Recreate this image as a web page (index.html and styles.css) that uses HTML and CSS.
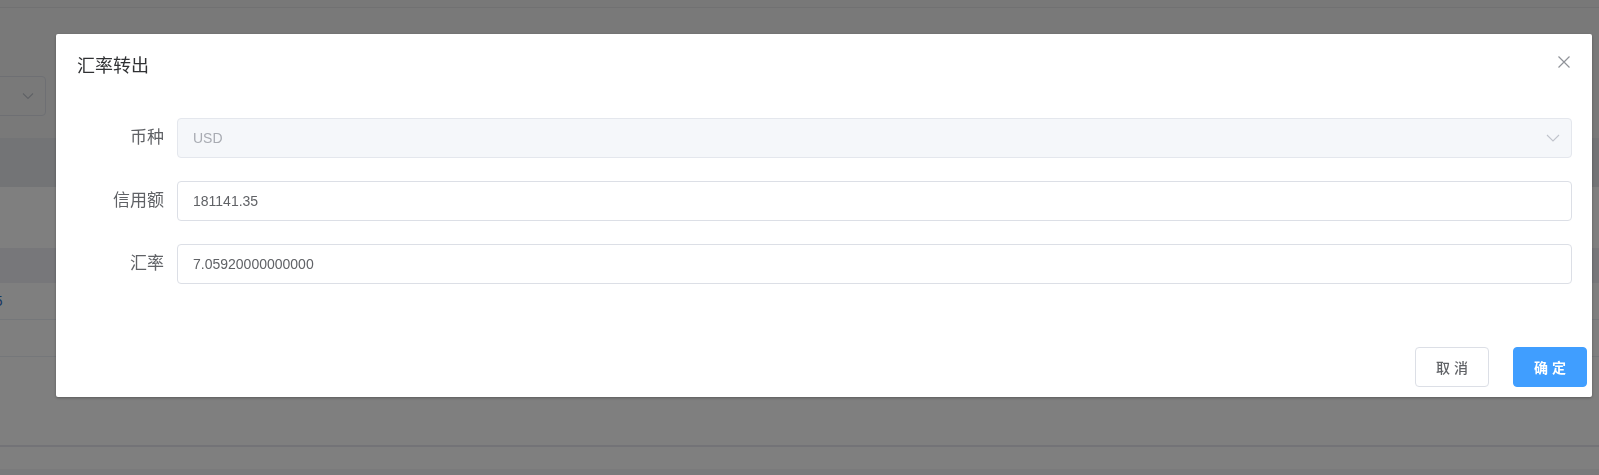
FILE: index.html
```html
<!DOCTYPE html>
<html lang="zh-CN">
<head>
<meta charset="utf-8">
<title>汇率转出</title>
<link rel="stylesheet" href="styles.css">
</head>
<body>
<div class="page">
  <div class="topbar"></div>
  <div class="filter">
    <div class="fake-select">
      <svg class="fake-arrow" width="12" height="8" viewBox="0 0 12 8"><path d="M1 1.5 L6 6.5 L11 1.5" fill="none" stroke="#c0c4cc" stroke-width="1.2"/></svg>
    </div>
  </div>
  <div class="table">
    <div class="thead"></div>
    <div class="trow tall"></div>
    <div class="trow hover"></div>
    <div class="trow line"><span class="link">35</span></div>
    <div class="trow line"></div>
    <div class="tempty"></div>
    <div class="tspacer"></div>
    <div class="tbottom"></div>
  </div>
</div>

<div class="overlay">
  <div class="dialog">
    <div class="dlg-header">
      <span class="dlg-title">汇率转出</span>
      <button class="dlg-close" type="button" aria-label="close">
        <svg width="16" height="16" viewBox="0 0 16 16"><path d="M2.5 2.5 L13.5 13.5 M13.5 2.5 L2.5 13.5" stroke="#909399" stroke-width="1.2" fill="none"/></svg>
      </button>
    </div>
    <div class="dlg-body">
      <div class="form">
        <div class="form-item">
          <label class="form-label">币种</label>
          <div class="form-content">
            <div class="input disabled">
              <span class="input-text">USD</span>
              <svg class="select-arrow" width="14" height="8" viewBox="0 0 14 8"><path d="M1 1 L7 7 L13 1" fill="none" stroke="#c0c4cc" stroke-width="1.1"/></svg>
            </div>
          </div>
        </div>
        <div class="form-item">
          <label class="form-label">信用额</label>
          <div class="form-content">
            <div class="input"><span class="input-text">181141.35</span></div>
          </div>
        </div>
        <div class="form-item last">
          <label class="form-label">汇率</label>
          <div class="form-content">
            <div class="input"><span class="input-text">7.05920000000000</span></div>
          </div>
        </div>
      </div>
    </div>
    <div class="dlg-footer">
      <button class="btn" type="button">取 消</button>
      <button class="btn primary" type="button">确 定</button>
    </div>
  </div>
</div>
</body>
</html>
```

FILE: styles.css
```css
* { box-sizing: border-box; }

html, body {
  margin: 0;
  padding: 0;
  width: 1599px;
  height: 475px;
  overflow: hidden;
  font-family: "Liberation Sans", "Noto Sans CJK SC", sans-serif;
  background: #ffffff;
}

.page {
  width: 1599px;
  height: 475px;
  display: flex;
  flex-direction: column;
  background: #ffffff;
}

.topbar {
  height: 8px;
  background: #f0f0f1;
  border-bottom: 1px solid #e2e2e4;
}

.filter {
  height: 130px;
  background: #f3f3f3;
  padding-top: 68px;
}

.fake-select {
  width: 106px;
  height: 40px;
  margin-left: -60px;
  border: 1px solid #dcdfe6;
  border-radius: 4px;
  display: flex;
  align-items: center;
  justify-content: flex-end;
  padding-right: 11px;
}

.table {
  display: flex;
  flex-direction: column;
  flex: 1;
}

.thead {
  height: 49px;
  background: #e7e8ec;
}

.trow.tall {
  height: 61px;
  background: #ffffff;
}

.trow.hover {
  height: 35px;
  background: #eeeff5;
}

.trow.line {
  height: 37px;
  border-bottom: 1px solid #ebeef5;
  display: flex;
  align-items: center;
}

.link {
  color: #2f6fc4;
  font-size: 14px;
  margin-left: -13px;
}

.tempty {
  height: 90px;
  border-bottom: 2px solid #e6e6ee;
}

.tspacer {
  height: 22px;
  background: #ffffff;
}

.tbottom {
  flex: 1;
  background: #f4f4f6;
}

/* overlay + dialog */
.overlay {
  position: fixed;
  inset: 0;
  background: rgba(0, 0, 0, 0.5);
  padding: 34px 0 0 56px;
}

.dialog {
  width: 1536px;
  background: #ffffff;
  border-radius: 2px;
  box-shadow: 0 1px 3px rgba(0, 0, 0, 0.3);
}

.dlg-header {
  display: flex;
  justify-content: space-between;
  align-items: flex-start;
  padding: 20px 20px 10px 21px;
}

.dlg-title {
  font-size: 18px;
  line-height: 24px;
  color: #303133;
}

.dlg-close {
  width: 16px;
  height: 16px;
  padding: 0;
  border: none;
  background: none;
  display: flex;
}

.dlg-body {
  padding: 30px 20px 52px 20px;
}

.form {
  display: flex;
  flex-direction: column;
  gap: 23px;
}

.form-item {
  display: flex;
  height: 40px;
}

.form-label {
  width: 101px;
  flex: none;
  text-align: right;
  padding-right: 13px;
  font-size: 17px;
  line-height: 40px;
  color: #606266;
}

.form-content {
  flex: 1;
}

.input {
  height: 40px;
  border: 1px solid #dcdfe6;
  border-radius: 4px;
  background: #ffffff;
  padding: 0 15px;
  display: flex;
  align-items: center;
  justify-content: space-between;
}

.input-text {
  font-size: 14px;
  color: #606266;
}

.input.disabled {
  background: #f5f7fa;
  border-color: #e4e7ed;
  padding-right: 11px;
}

.input.disabled .input-text {
  color: #a8abb2;
}

.dlg-footer {
  display: flex;
  justify-content: flex-end;
  gap: 24px;
  padding: 11px 5px 10px 20px;
}

.btn {
  width: 74px;
  height: 40px;
  border: 1px solid #dcdfe6;
  border-radius: 4px;
  background: #ffffff;
  color: #606266;
  font-family: "Liberation Sans", "Noto Sans CJK SC", sans-serif;
  font-size: 14px;
  font-weight: 500;
  padding: 0;
}

.btn.primary {
  background: #409eff;
  border-color: #409eff;
  color: #ffffff;
  font-weight: 700;
}
```
